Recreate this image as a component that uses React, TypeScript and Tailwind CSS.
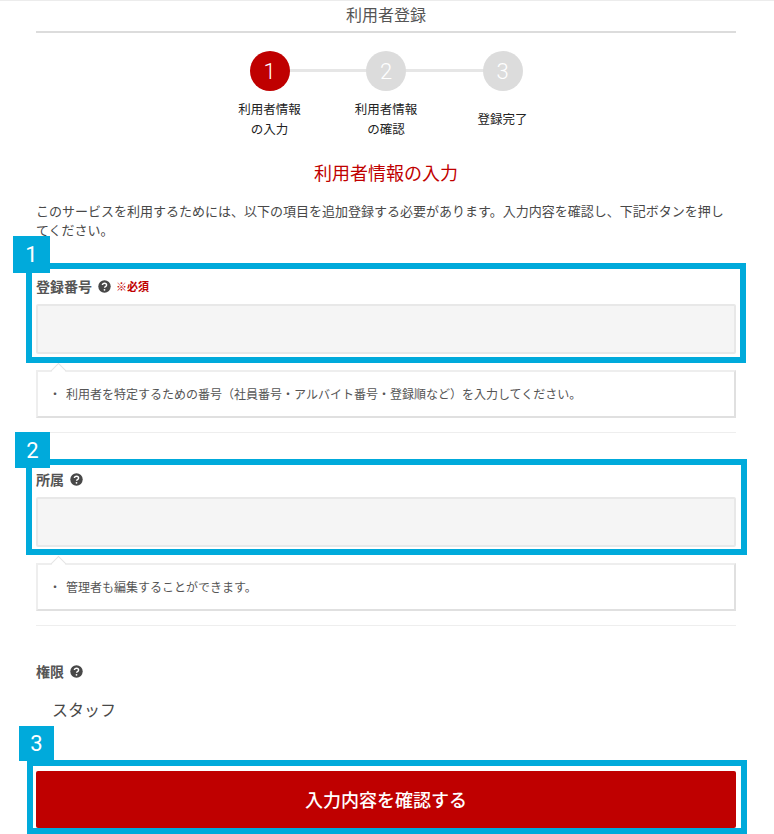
const jp = "font-['Noto_Sans_CJK_JP','Noto_Sans',sans-serif]";

function HelpIcon() {
  return (
    <svg width="13" height="13" viewBox="0 0 13 13" className="shrink-0">
      <circle cx="6.5" cy="6.5" r="6.2" fill="#484848" />
      <path d="M4.4 5.1c0-1.2 1-1.9 2.1-1.9 1.2 0 2.1.7 2.1 1.8 0 1.6-2 1.5-2 2.8" fill="none" stroke="#fff" strokeWidth="1.4" />
      <circle cx="6.5" cy="9.8" r="0.9" fill="#fff" />
    </svg>
  );
}

function Step({ num, label, active }: { num: string; label: React.ReactNode; active?: boolean }) {
  return (
    <div className="relative z-10 flex w-[116.5px] flex-col items-center">
      <div className={`flex h-10 w-10 items-center justify-center rounded-full text-[22px] font-light text-white font-['Roboto',sans-serif] ${active ? 'bg-[#bf0000]' : 'bg-[#dcdcdc]'}`}>
        {num}
      </div>
      <div className="mt-[8px] flex h-10 items-center text-center text-[12.5px] leading-[20px] text-[#222]">{label}</div>
    </div>
  );
}

function Badge({ num, className }: { num: string; className: string }) {
  return (
    <div className={`absolute flex items-center justify-center bg-[#00aadb] text-[22px] text-white font-['Roboto',sans-serif] ${className}`}>
      {num}
    </div>
  );
}

function Hint({ text }: { text: string }) {
  return (
    <div className="relative mt-[16px] flex h-[48px] items-center border-2 border-[#eeeeee] border-b-[#e0e0e0] border-r-[#e0e0e0] bg-white pl-[11px] text-[12px] text-[#555]">
      <span className="absolute left-[15px] top-[-7px] h-[11px] w-[11px] rotate-45 border-l border-t border-[#e4e4e4] bg-white" />
      <span className="w-[17px] shrink-0">・</span>
      {text}
    </div>
  );
}

export default function App() {
  return (
    <div className={`relative h-[834px] w-[774px] overflow-hidden border-t border-[#ececec] bg-white text-[#484848] ${jp}`}>
      <div className="mx-[36px] w-[700px]">
        <h1 className="flex h-[32px] items-center justify-center border-b-2 border-[#dcdcdc] pb-[5px] text-[16px] font-normal text-[#555]">利用者登録</h1>

        <div className="relative mt-[18px] flex justify-center">
          <div className="absolute left-[233px] top-[18px] h-[3px] w-[233px] bg-[#e6e6e6]" />
          <Step num="1" active label={<span>利用者情報<br />の入力</span>} />
          <Step num="2" label={<span>利用者情報<br />の確認</span>} />
          <Step num="3" label="登録完了" />
        </div>

        <h2 className="mt-[20px] text-center text-[18px] font-normal leading-[26px] text-[#bf0000]">利用者情報の入力</h2>

        <p className="mt-[16px] text-[13px] leading-[19px] text-[#484848]">
          このサービスを利用するためには、以下の項目を追加登録する必要があります。入力内容を確認し、下記ボタンを押してください。
        </p>

        <div className="relative mt-[35px] border-b border-[#eeeeee] pb-[14px]">
          <div className="flex h-[24px] items-center gap-[6px]">
            <span className="text-[14px] font-bold text-[#555]">登録番号</span>
            <HelpIcon />
            <span className="ml-[-1px] text-[11px] font-bold text-[#bf0000]">※必須</span>
          </div>
          <div className="mt-[6px] h-[50px] rounded-[2px] border-2 border-[#e8e8e8] bg-[#f5f5f5]" />
          <Hint text="利用者を特定するための番号（社員番号・アルバイト番号・登録順など）を入力してください。" />
          <div className="pointer-events-none absolute left-[-10px] top-[-11px] h-[100px] w-[720px] border-[6px] border-[#00aadb]" />
          <Badge num="1" className="left-[-23px] top-[-38px] h-[37px] w-[37px]" />
        </div>

        <div className="relative mt-[34px] border-b border-[#eeeeee] pb-[14px]">
          <div className="flex h-[24px] items-center gap-[6px]">
            <span className="text-[14px] font-bold text-[#555]">所属</span>
            <HelpIcon />
          </div>
          <div className="mt-[6px] h-[50px] rounded-[2px] border-2 border-[#e8e8e8] bg-[#f5f5f5]" />
          <Hint text="管理者も編集することができます。" />
          <div className="pointer-events-none absolute left-[-10px] top-[-8px] h-[96px] w-[721px] border-[6px] border-[#00aadb]" />
          <Badge num="2" className="left-[-21px] top-[-35px] h-[36px] w-[35px]" />
        </div>

        <div className="mt-[33px] flex h-[24px] items-center gap-[6px]">
          <span className="text-[14px] font-bold text-[#555]">権限</span>
          <HelpIcon />
        </div>
        <div className="mt-[14px] pl-[16px] text-[16px] leading-[24px] text-[#484848]">スタッフ</div>

        <div className="relative mt-[50px]">
          <button className="flex h-[57px] w-full items-center justify-center rounded-[2px] bg-[#bf0000] text-[18px] font-medium text-white">
            入力内容を確認する
          </button>
          <div className="pointer-events-none absolute left-[-9px] top-[-11px] h-[74px] w-[720px] border-[6px] border-[#00aadb]" />
          <Badge num="3" className="left-[-17px] top-[-45px] h-[35px] w-[35px]" />
        </div>
      </div>
    </div>
  );
}
